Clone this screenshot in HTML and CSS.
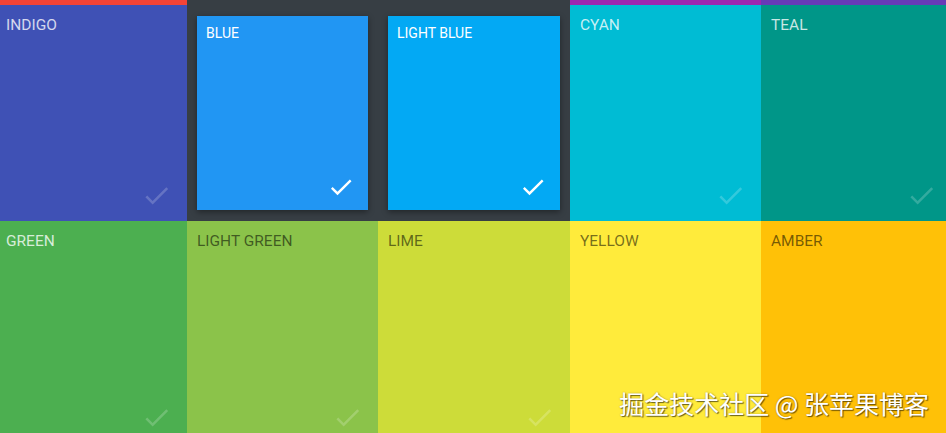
FILE: index.html
```html
<!DOCTYPE html>
<html lang="en">
<head>
    <meta charset="UTF-8">
    <meta name="viewport" content="width=device-width, initial-scale=1.0">
    <title>Palette</title>
    <link rel="stylesheet" href="styles.css">
</head>
<body>
    <div class="palette">
        <!-- tail of the row above, scrolled almost out of view -->
        <div class="swatch red"></div>
        <div class="swatch dark"></div>
        <div class="swatch dark"></div>
        <div class="swatch purple"></div>
        <div class="swatch deep-purple"></div>

        <div class="swatch indigo light-text">
            <span class="name">Indigo</span>
            <svg class="check" viewBox="0 0 24 24"><path d="M9 16.17L4.83 12l-1.42 1.41L9 19 21 7l-1.41-1.41z"/></svg>
        </div>
        <div class="swatch selected">
            <div class="card blue">
                <span class="name">Blue</span>
                <svg class="check" viewBox="0 0 24 24"><path d="M9 16.17L4.83 12l-1.42 1.41L9 19 21 7l-1.41-1.41z"/></svg>
            </div>
        </div>
        <div class="swatch selected">
            <div class="card light-blue">
                <span class="name">Light Blue</span>
                <svg class="check" viewBox="0 0 24 24"><path d="M9 16.17L4.83 12l-1.42 1.41L9 19 21 7l-1.41-1.41z"/></svg>
            </div>
        </div>
        <div class="swatch cyan light-text">
            <span class="name">Cyan</span>
            <svg class="check" viewBox="0 0 24 24"><path d="M9 16.17L4.83 12l-1.42 1.41L9 19 21 7l-1.41-1.41z"/></svg>
        </div>
        <div class="swatch teal light-text">
            <span class="name">Teal</span>
            <svg class="check" viewBox="0 0 24 24"><path d="M9 16.17L4.83 12l-1.42 1.41L9 19 21 7l-1.41-1.41z"/></svg>
        </div>

        <div class="swatch green light-text">
            <span class="name">Green</span>
            <svg class="check" viewBox="0 0 24 24"><path d="M9 16.17L4.83 12l-1.42 1.41L9 19 21 7l-1.41-1.41z"/></svg>
        </div>
        <div class="swatch light-green dark-text">
            <span class="name">Light Green</span>
            <svg class="check" viewBox="0 0 24 24"><path d="M9 16.17L4.83 12l-1.42 1.41L9 19 21 7l-1.41-1.41z"/></svg>
        </div>
        <div class="swatch lime dark-text">
            <span class="name">Lime</span>
            <svg class="check" viewBox="0 0 24 24"><path d="M9 16.17L4.83 12l-1.42 1.41L9 19 21 7l-1.41-1.41z"/></svg>
        </div>
        <div class="swatch yellow dark-text">
            <span class="name">Yellow</span>
        </div>
        <div class="swatch amber dark-text">
            <span class="name">Amber</span>
        </div>
    </div>

    <div class="watermark">掘金技术社区 @ 张苹果博客</div>
</body>
</html>
```

FILE: styles.css
```css
html, body {
    margin: 0;
    padding: 0;
    height: 100%;
    overflow: hidden;
}

body {
    font-family: Roboto, "Liberation Sans", sans-serif;
    background-color: #373e44;
}

.palette {
    display: grid;
    grid-template-columns: 191px 191px 192px 191px 191px;
    grid-template-rows: 5px 216px 222px;
    margin-left: -4px;
}

.swatch {
    position: relative;
    overflow: hidden;
}

.name {
    display: block;
    padding: 10px 10px 8px;
    font-size: 15.5px;
    line-height: 20px;
    text-transform: uppercase;
}

.check {
    position: absolute;
    right: 15px;
    bottom: 10px;
    width: 31px;
    height: 31px;
    fill: rgba(255, 255, 255, 0.2);
}

.light-text { color: rgba(255, 255, 255, 0.78); }
.dark-text { color: rgba(0, 0, 0, 0.55); }

.red { background-color: #f44336; }
.dark { background-color: #373e44; }
.purple { background-color: #9c27b0; }
.deep-purple { background-color: #673ab7; }
.indigo { background-color: #3f51b5; }
.blue { background-color: #2196f3; }
.light-blue { background-color: #03a9f4; }
.cyan { background-color: #00bcd4; }
.teal { background-color: #009688; }
.green { background-color: #4caf50; }
.light-green { background-color: #8bc34a; }
.lime { background-color: #cddc39; }
.yellow { background-color: #ffeb3b; }
.amber { background-color: #ffc107; }

.selected {
    background-color: #373e44;
    padding: 11px 10px;
    display: flex;
}

.card {
    position: relative;
    flex: 1;
    color: #fff;
    box-shadow: 0 2px 6px rgba(0, 0, 0, 0.4);
}

.card .name {
    padding: 8px 9px;
    font-size: 14px;
    line-height: 18px;
}

.card .check {
    right: 13px;
    bottom: 9px;
    width: 28px;
    height: 28px;
    fill: #fff;
}

.watermark {
    position: absolute;
    right: 17px;
    bottom: 14px;
    font-family: "Noto Sans CJK SC", sans-serif;
    font-size: 25px;
    line-height: 32px;
    color: #fff;
    text-shadow: 1px 1px 1px rgba(0, 0, 0, 0.55), 0 0 2px rgba(0, 0, 0, 0.3);
}
```
